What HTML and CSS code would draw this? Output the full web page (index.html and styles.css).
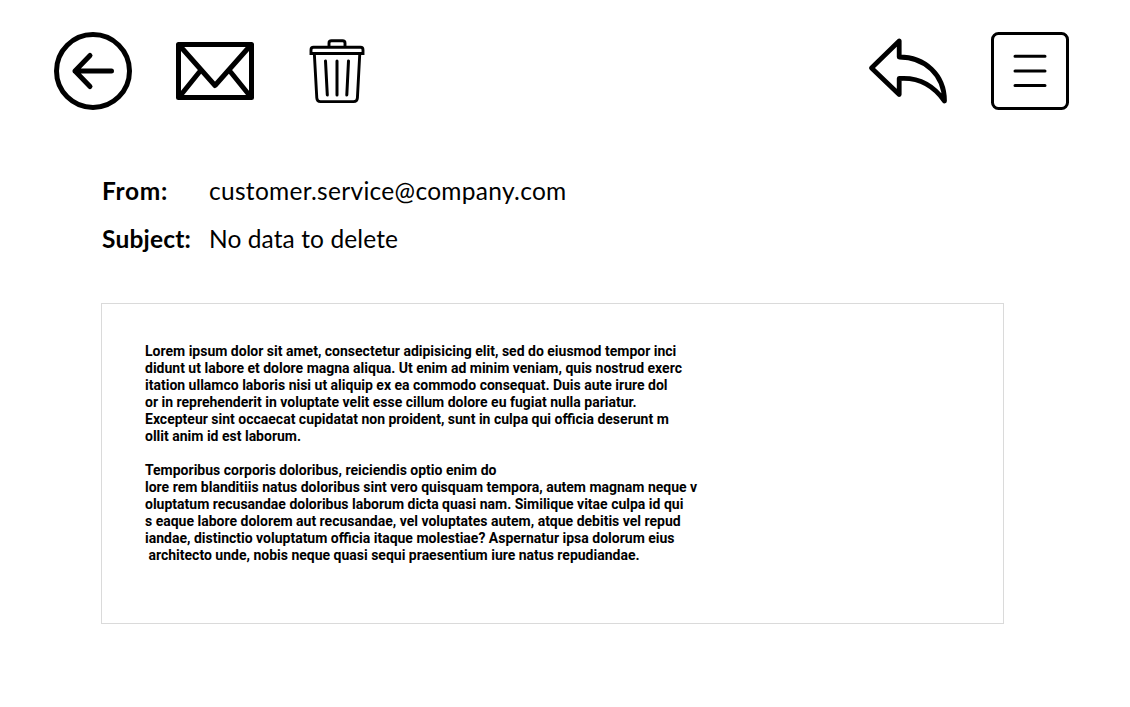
FILE: index.html
```html
<!DOCTYPE html>
<html lang="en">
<head>
<meta charset="utf-8">
<title>Message</title>
<link rel="stylesheet" href="styles.css">
</head>
<body>
<header class="toolbar">
  <button class="tool" aria-label="Back"><svg class="icon" viewBox="53 31 80 80"><circle cx="93" cy="71" r="36.5" stroke-width="5"/><path d="M111.500 71H75L90 55.500M75 71L90 86.500" stroke-width="5"/></svg></button>
  <button class="tool" aria-label="Mail"><svg class="icon" viewBox="175 31 80 80"><path d="M178.500 44.500H251.500V97.500H178.500ZM180 46L215 85.500L250 46M201 70L180 96M229 70L250 96" stroke-width="5"/></svg></button>
  <button class="tool" aria-label="Delete"><svg class="icon" viewBox="297 31 80 80"><path class="lid" d="M311 53.500V50Q311 47.300 313.500 47.300H360.500Q363 47.300 363 50V53.500Z" stroke-width="2.900"/><path d="M329 46V43Q329 40.800 331.500 40.800H342.500Q345 40.800 345 43V46M314.400 55L316.800 98Q317 101.600 320.500 101.600H353.500Q357.200 101.600 357.400 98L359.700 55" stroke-width="2.900"/><path d="M325.500 61L327.300 95M337 61V95M348.500 61L346.800 95" stroke-width="3"/></svg></button>
  <span class="gap"></span>
  <button class="tool" aria-label="Reply"><svg class="icon" viewBox="868 31 80 80"><path d="M871.500 68L899.200 41V57C925 57 944.500 75 944.500 101C934 86 919 77 899.200 78.500V94.500Z" stroke-width="4.800"/></svg></button>
  <button class="tool" aria-label="Menu"><svg class="icon" viewBox="990 31 80 80"><rect x="992.500" y="33.500" width="75" height="75" rx="6" stroke-width="3"/><path d="M1015 56.300H1045M1015 71H1045M1015 85.600H1045" stroke-width="3"/></svg></button>
</header>
<main class="message">
  <dl class="meta">
    <dt class="label from">From:</dt><dd class="value address">customer.service@company.com</dd>
    <dt class="label">Subject:</dt><dd class="value subject">No data to delete</dd>
  </dl>
  <article class="body">
    <p class="para">Lorem ipsum dolor sit amet, consectetur adipisicing elit, sed do eiusmod tempor inci
didunt ut labore et dolore magna aliqua. Ut enim ad minim veniam, quis nostrud exerc
itation ullamco laboris nisi ut aliquip ex ea commodo consequat. Duis aute irure dol
or in reprehenderit in voluptate velit esse cillum dolore eu fugiat nulla pariatur.
Excepteur sint occaecat cupidatat non proident, sunt in culpa qui officia deserunt m
ollit anim id est laborum.</p>
    <p class="para">Temporibus corporis doloribus, reiciendis optio enim do
lore rem blanditiis natus doloribus sint vero quisquam tempora, autem magnam neque v
oluptatum recusandae doloribus laborum dicta quasi nam. Similique vitae culpa id qui
s eaque labore dolorem aut recusandae, vel voluptates autem, atque debitis vel repud
iandae, distinctio voluptatum officia itaque molestiae? Aspernatur ipsa dolorum eius
 architecto unde, nobis neque quasi sequi praesentium iure natus repudiandae.</p>
  </article>
</main>
</body>
</html>
```
FILE: styles.css
```css
* { box-sizing: border-box; }
body { margin: 0; background: #fff; color: #000; font-family: Lato, Carlito, sans-serif; }
.toolbar { display: flex; gap: 42px; padding: 31px 60px 0 53px; height: 111px; }
.tool { width: 80px; height: 80px; padding: 0; border: 0; background: none; color: inherit; }
.icon { display: block; width: 80px; height: 80px; fill: none; stroke: currentColor; stroke-linecap: round; stroke-linejoin: round; }
.lid { stroke-linejoin: miter; }
.gap { flex: 1; }
.message { padding: 56px 126px 0 101px; }
.meta { display: grid; grid-template-columns: 108px 1fr; grid-auto-rows: 48px; margin: 0 0 40px; font-size: 24.5px; line-height: 48px; }
.label { padding-left: 1px; font-weight: 700; letter-spacing: .2px; white-space: nowrap; }
.from { letter-spacing: .7px; }
.value { margin: 0; white-space: nowrap; }
.address { letter-spacing: .3px; }
.subject { letter-spacing: .1px; }
.body { height: 321px; padding: 39px 43px; border: 1px solid #dadada; font: 700 14px/17px Roboto, sans-serif; }
.para { margin: 0 0 17px; white-space: pre; }
```
